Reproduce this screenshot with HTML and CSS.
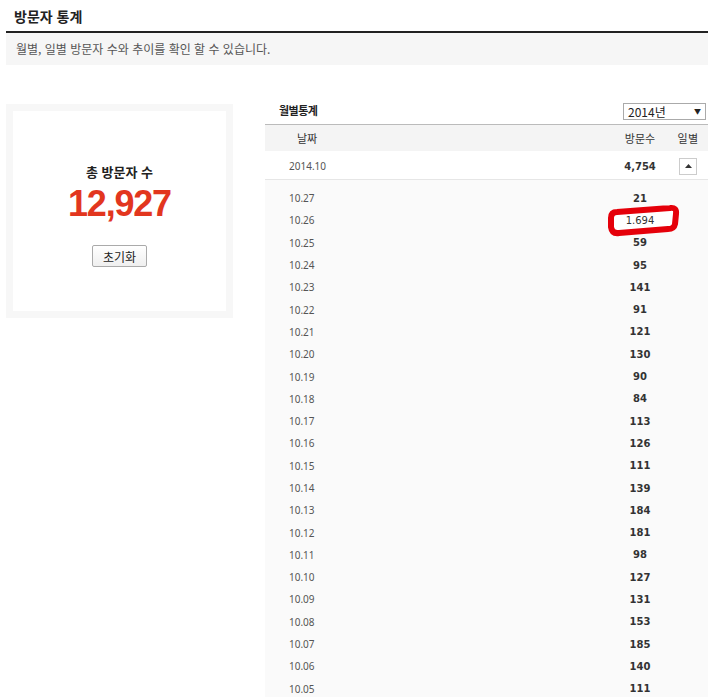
FILE: index.html
```html
<!DOCTYPE html>
<html lang="ko">
<head>
  <meta charset="UTF-8" />
  <title>방문자 통계</title>
  <link rel="stylesheet" href="styles.css">
</head>
<body>
  <div class="page">
    <h1 class="page-title">방문자 통계</h1>
    <p class="page-desc">월별, 일별 방문자 수와 추이를 확인 할 수 있습니다.</p>

    <div class="content">
      <div class="total-card">
        <div class="total-inner">
          <div class="total-label">총 방문자 수</div>
          <div class="total-count">12,927</div>
          <button class="reset-btn">초기화</button>
        </div>
      </div>

      <div class="stats">
        <div class="stats-head">
          <h2>월별통계</h2>
          <div class="year-select">2014년<span class="arrow">▼</span></div>
        </div>

        <div class="stats-row header">
          <span class="col-date">날짜</span>
          <span class="col-count">방문수</span>
          <span class="col-day">일별</span>
        </div>

        <div class="stats-row month">
          <span class="col-date">2014.10</span>
          <span class="col-count">4,754</span>
          <span class="col-day">
            <button class="fold-btn">
              <svg width="7" height="4" viewBox="0 0 7 4"><path d="M0 4 L3.5 0 L7 4 Z" fill="#333"/></svg>
            </button>
          </span>
        </div>

        <div class="days" id="days"></div>
      </div>
    </div>
  </div>

  <script>
    // daily rows for october
    const days = [
      ["10.27", "21"], ["10.26", "1.694"], ["10.25", "59"], ["10.24", "95"],
      ["10.23", "141"], ["10.22", "91"], ["10.21", "121"], ["10.20", "130"],
      ["10.19", "90"], ["10.18", "84"], ["10.17", "113"], ["10.16", "126"],
      ["10.15", "111"], ["10.14", "139"], ["10.13", "184"], ["10.12", "181"],
      ["10.11", "98"], ["10.10", "127"], ["10.09", "131"], ["10.08", "153"],
      ["10.07", "185"], ["10.06", "140"], ["10.05", "111"]
    ];

    const list = document.getElementById("days");
    days.forEach(([date, count]) => {
      const row = document.createElement("div");
      row.className = "stats-row day";
      let mark = "";
      if (date === "10.26") {
        row.classList.add("marked");
        mark = `<svg class="mark" width="74" height="34" viewBox="0 0 74 34">
          <path d="M10 8 L63 4 Q70 3 69 10 L68 20 Q67 25 61 25 L12 29 Q5 30 4 23 L4 14 Q4 8 10 8 Z" fill="#fff" stroke="#e5000a" stroke-width="6" stroke-linejoin="round"/>
        </svg>`;
      }
      row.innerHTML = `
        <span class="col-date">${date}</span>
        <span class="col-count">${mark}<b>${count}</b></span>
        <span class="col-day"></span>
      `;
      list.appendChild(row);
    });
  </script>
</body>
</html>
```

FILE: styles.css
```css
* { box-sizing: border-box; }
body {
  margin: 0;
  background: #fff;
  font-family: "Noto Sans CJK KR", "Noto Sans", sans-serif;
  color: #222;
}

.page {
  width: 702px;
  margin-left: 6px;
}

.page-title {
  margin: 0;
  padding: 5px 0 0 8px;
  height: 33px;
  font-size: 14px;
  font-weight: bold;
  line-height: 22px;
  border-bottom: 2px solid #222;
}

.page-desc {
  margin: 0;
  height: 32px;
  padding: 0 10px;
  background: #f6f6f6;
  font-size: 12px;
  line-height: 31px;
  color: #555;
}

.content {
  display: flex;
  align-items: flex-start;
  gap: 32px;
  margin-top: 39px;
}

/* total visitors */
.total-card {
  width: 227px;
  padding: 7px;
  background: #f7f7f7;
}

.total-inner {
  height: 200px;
  background: #fff;
  display: flex;
  flex-direction: column;
  align-items: center;
  padding-top: 52px;
}

.total-label {
  font-size: 13px;
  font-weight: bold;
  line-height: 18px;
}

.total-count {
  margin-top: 4px;
  font-family: "Liberation Sans", Arial, sans-serif;
  font-size: 36px;
  font-weight: bold;
  letter-spacing: -1.2px;
  line-height: 38px;
  color: #e2361e;
}

.reset-btn {
  margin-top: 22px;
  width: 55px;
  height: 22px;
  padding: 0;
  border: 1px solid #aaa;
  border-radius: 2px;
  background: linear-gradient(#fff, #efefef);
  font-family: "Noto Sans CJK KR", sans-serif;
  font-size: 12px;
  color: #222;
}

/* monthly stats */
.stats {
  flex: 1;
  margin-top: -6px;
}

.stats-head {
  display: flex;
  justify-content: space-between;
  align-items: center;
  height: 27px;
  padding: 0 2px 0 14px;
  border-bottom: 1px solid #bbb;
}

.stats-head h2 {
  margin: -2px 0 0;
  font-size: 11px;
  font-weight: bold;
  letter-spacing: -0.5px;
}

.year-select {
  width: 83px;
  height: 17px;
  border: 1px solid #aaa;
  padding: 0 4px;
  font-size: 12px;
  line-height: 15px;
  display: flex;
  justify-content: space-between;
  align-items: center;
}

.year-select .arrow { font-size: 7px; }

.stats-row {
  display: grid;
  grid-template-columns: 1fr 56px 40px;
  align-items: center;
}

.stats-row.header {
  height: 26px;
  background: #f4f4f4;
}

.stats-row.header span {
  font-family: "Noto Sans CJK KR", sans-serif;
  font-size: 11px;
  font-weight: normal;
  color: #333;
  text-align: center;
}

.stats-row.header .col-date { padding-left: 32px; text-align: left; }
.stats-row.header .col-day { letter-spacing: 0.5px; }

.stats-row.month {
  height: 29px;
  padding-top: 2px;
  border-bottom: 1px solid #e6e6e6;
}

.col-date {
  padding-left: 24px;
  font-family: "Noto Sans", sans-serif;
  font-size: 10px;
  color: #555;
}

.col-count {
  position: relative;
  text-align: center;
  font-family: "DejaVu Sans", Verdana, sans-serif;
  font-size: 10px;
  font-weight: bold;
  color: #333;
}

.col-day { text-align: center; }

.fold-btn {
  display: flex;
  align-items: center;
  justify-content: center;
  margin: 0 auto;
  width: 18px;
  height: 17px;
  padding: 0;
  border: 1px solid #ccc;
  background: #fff;
}

.days {
  background: #fafafa;
  padding-top: 7px;
}

.stats-row.day { height: 22.3px; }

.col-count b { position: relative; }

.col-count .mark {
  position: absolute;
  left: -5px;
  top: -11px;
}

.marked .col-count b { font-weight: normal; }
```
